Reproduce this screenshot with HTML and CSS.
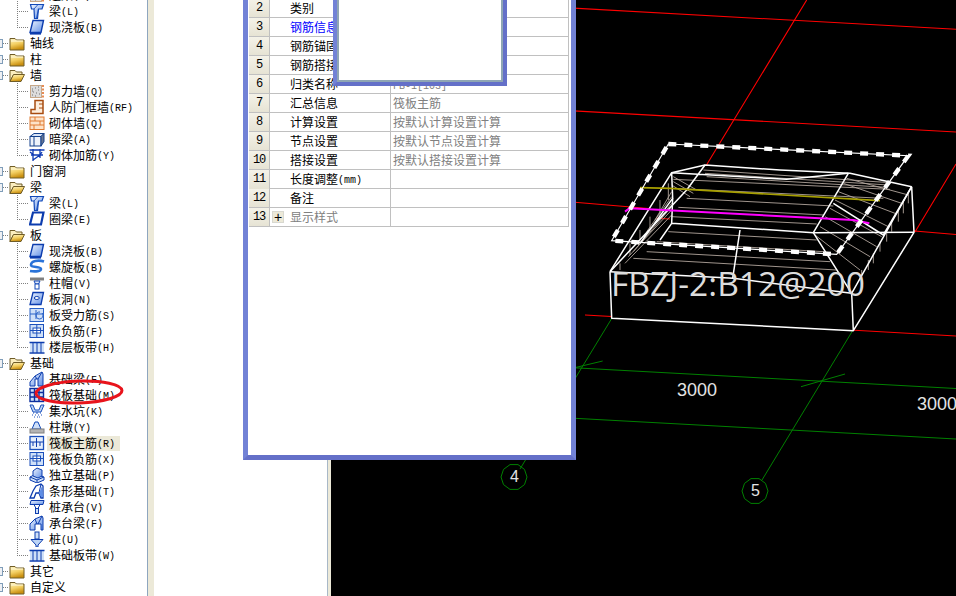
FILE: index.html
```html
<!DOCTYPE html>
<html lang="zh">
<head>
<meta charset="utf-8">
<title>筏板主筋</title>
<link rel="stylesheet" href="styles.css">
</head>
<body>
<svg class="defs" width="0" height="0">
  <defs>
    <linearGradient id="fy" x1="0" y1="0" x2="0.3" y2="1"><stop offset="0" stop-color="#fff6c8"/><stop offset=".55" stop-color="#f3cf62"/><stop offset="1" stop-color="#c98f10"/></linearGradient>
    <linearGradient id="bl" x1="0" y1="0" x2="1" y2="1"><stop offset="0" stop-color="#f2f7ff"/><stop offset="1" stop-color="#5f8ee6"/></linearGradient>
    <symbol id="fc" viewBox="0 0 16 16"><path d="M1 3.500h5l1.500 1.500H15V15H1z" fill="url(#fy)" stroke="#6f5c28"/><path d="M2 6h12" stroke="#fffbe0"/></symbol>
    <symbol id="fo" viewBox="0 0 16 16"><path d="M1 3.500h5L7.500 5H13v3H4.500L1 14.500z" fill="#fbeec0" stroke="#6f5c28"/><path d="M4.500 7.500H15.500L12 14.500H1z" fill="url(#fy)" stroke="#6f5c28"/></symbol>
    <symbol id="liang" viewBox="0 0 16 16"><path d="M1.500 1.500h13L13 6H9.500L8.500 15.500h-3L5 6H2.500z" fill="url(#bl)" stroke="#1148b8" stroke-width="1.200"/><path d="M9.500 6l-2 9M5 6l4-4.500" stroke="#1148b8" stroke-width=".8"/></symbol>
    <symbol id="slab" viewBox="0 0 16 16"><path d="M4 1.500h10.500L12 13.500H1z" fill="url(#bl)" stroke="#0c3cae" stroke-width="1.400"/><path d="M1 14.800h11" stroke="#0c3cae" stroke-width="1.600"/></symbol>
    <symbol id="ring" viewBox="0 0 16 16"><path d="M4 1.500h10.500L12 13.500H1z" fill="#fff" stroke="#0c3cae" stroke-width="2.200"/></symbol>
    <symbol id="shear" viewBox="0 0 16 16"><rect x="1.500" y="2.500" width="11" height="12" fill="#dcdcdc" stroke="#c8a888"/><path d="M3 6h1M6 5h1M9 7h1M4 9h1M7 10h1M10 11h1M3 12h1M6 13h1M3 8h1M9 4h1" stroke="#707070"/><path d="M14 2v13" stroke="#e0661c" stroke-dasharray="2 1.500" stroke-width="1.500"/></symbol>
    <symbol id="door" viewBox="0 0 16 16"><path d="M6 1.500h8v13H2v-4h4z" fill="#fdeedd" stroke="#a84c10" stroke-width="1.500"/><path d="M10 5h4M10 9h4" stroke="#a84c10"/></symbol>
    <symbol id="brick" viewBox="0 0 16 16"><rect x="1" y="2" width="14" height="12.500" fill="#fde3c8" stroke="#e07a30"/><path d="M1 6h14M1 10h14M6 2v4M11 6v4M5 10v4.500" stroke="#e07a30"/></symbol>
    <symbol id="hbeam" viewBox="0 0 16 16"><path d="M1 5.500l4-3h10l-3 3z" fill="#d8e4f8" stroke="#14418c"/><rect x="1" y="5.500" width="11" height="9.500" fill="#eef3fb" stroke="#14418c"/><path d="M12 5.500l3-3v8l-3 4.500z" fill="#687690" stroke="#14418c"/><path d="M5 5.500V15" stroke="#14418c"/></symbol>
    <symbol id="net" viewBox="0 0 16 16"><path d="M.5 3h15M2 8h12M4 2v12M11 2v9M4 13l7-5M1 5l4 3M13 5l-2 3" fill="none" stroke="#0f3bb4" stroke-width="1.300"/></symbol>
    <symbol id="spiral" viewBox="0 0 16 16"><path d="M15 2.500C9 .5 2 2 2 6c0 3 10 1 10 4 0 2-5 3-11 2" fill="none" stroke="#2a73d8" stroke-width="2.600"/></symbol>
    <symbol id="cap" viewBox="0 0 16 16"><path d="M1 4h14" stroke="#808080" stroke-width="3"/><path d="M5 6h6L9.500 9h-3z" fill="#e8eefb" stroke="#1148b8"/><rect x="6" y="9" width="4" height="5" fill="#fff" stroke="#1148b8"/></symbol>
    <symbol id="hole" viewBox="0 0 16 16"><path d="M4 1.500h10.500L12 13.500H1z" fill="url(#bl)" stroke="#0c3cae" stroke-width="1.300"/><ellipse cx="7.800" cy="7" rx="2.500" ry="1.500" fill="#fff" stroke="#0c3cae"/></symbol>
    <symbol id="stress" viewBox="0 0 16 16"><rect x="1" y="1.500" width="13.500" height="13" fill="#cfe0f8" stroke="#2a62c8"/><path d="M1 7h13M7 3v9" stroke="#2a62c8"/><path d="M13 6a3.500 3.500 0 1 1-2-1" fill="none" stroke="#2a62c8"/></symbol>
    <symbol id="neg" viewBox="0 0 16 16"><rect x="1" y="1.500" width="13.500" height="13" fill="#cfe0f8" stroke="#1c50bc"/><rect x="4" y="5" width="7.500" height="5" fill="#fff" stroke="#1c50bc"/><path d="M1 7.500h13.500M7.800 2v12" stroke="#1c50bc"/></symbol>
    <symbol id="strip" viewBox="0 0 16 16"><rect x="1" y="4" width="14" height="9" fill="#cfe0f8"/><path d="M.5 3.500h15M.5 14h15" stroke="#0c3cae" stroke-width="1.400"/><path d="M4 3.500V14M8 3.500V14M12 3.500V14" stroke="#0c3cae"/></symbol>
    <symbol id="fbeam" viewBox="0 0 16 16"><path d="M1 15V11L6 5l7-4 1 2v12H9V8H6v7z" fill="url(#bl)" stroke="#0c3cae"/><path d="M6 5l2 3M13 1l-4 7" stroke="#0c3cae"/></symbol>
    <symbol id="grid" viewBox="0 0 16 16"><rect x="1" y="1.500" width="13.500" height="13" fill="#cfe0f8" stroke="#0c2f9e" stroke-width="1.400"/><path d="M1 5.500h13.500M1 10h13.500M5.500 1.500v13M10 1.500v13" stroke="#0c2f9e" stroke-width="1.400"/></symbol>
    <symbol id="pit" viewBox="0 0 16 16"><path d="M1 2h3l2 5h4l2-5h3l-3 7H4z" fill="#bcd4f6" stroke="#1c50bc"/><path d="M4 10h1M7 10h2M11 10h1M3 12h1M6 12h1M9 12h1M12 12h1M5 14h1M8 14h1M10 14h1" stroke="#1c50bc"/></symbol>
    <symbol id="pier" viewBox="0 0 16 16"><path d="M6 3h3l3 7H3z" fill="#cfe0f8" stroke="#1148b8"/><rect x="1" y="10" width="14" height="4" fill="#b4b4b4" stroke="#808080"/></symbol>
    <symbol id="main" viewBox="0 0 16 16"><rect x="1" y="1.500" width="13.500" height="13" fill="#e6effc" stroke="#1c50bc" stroke-width="1.300"/><path d="M1 7h13.500M7.500 3v9M4 7v4M11 7v4" stroke="#0c3cae" fill="none"/></symbol>
    <symbol id="iso" viewBox="0 0 16 16"><path d="M1 10l6-3 8 3v3l-7 3-7-3z" fill="#cfe0f8" stroke="#0c3cae"/><path d="M1 10l7 3 7-3M8 13v3" fill="none" stroke="#0c3cae"/><path d="M4 4l4-3 5 2v6l-4 2-5-2z" fill="url(#bl)" stroke="#0c3cae"/></symbol>
    <symbol id="arch" viewBox="0 0 16 16"><path d="M1 15l3-7 3-5 5-2 2 2v12h-2l-2-5H7l-2 5z" fill="#fff" stroke="#0c3cae" stroke-width="1.300"/><path d="M12 1l-2 9" stroke="#0c3cae"/><path d="M10 10l3-7 1 11h-2z" fill="#5f8ee6"/></symbol>
    <symbol id="pcap" viewBox="0 0 16 16"><path d="M2 1.500h13l-1 4H1z" fill="url(#bl)" stroke="#0c3cae"/><path d="M5 5.500h6L9 9.500H7z" fill="#fff" stroke="#0c3cae"/><rect x="6.500" y="9.500" width="3" height="5" fill="#cfe0f8" stroke="#0c3cae"/></symbol>
    <symbol id="cbeam" viewBox="0 0 16 16"><path d="M1 15V9L6 4l7-3 1 2v12h-2V9H6v6z" fill="url(#bl)" stroke="#0c3cae"/><path d="M6 4l2 5M13 1l-4 8" stroke="#0c3cae"/></symbol>
    <symbol id="pile" viewBox="0 0 16 16"><rect x="6" y="1" width="4" height="7" fill="#cfe0f8" stroke="#0c3cae"/><path d="M2 8.500h12L9 14v2H7v-2z" fill="#bcd4f6" stroke="#0c3cae"/></symbol>
  </defs>
</svg>

<main class="app">
  <nav class="tree">
    <div class="row child"><i class="conn"></i><svg class="ico"><use href="#shear"/></svg><span class="lab">连梁<b class="k">(G)</b></span></div>
    <div class="row child"><i class="conn"></i><svg class="ico"><use href="#liang"/></svg><span class="lab">梁<b class="k">(L)</b></span></div>
    <div class="row child"><i class="conn end"></i><svg class="ico"><use href="#slab"/></svg><span class="lab">现浇板<b class="k">(B)</b></span></div>
    <div class="row group"><i class="exp"></i><i class="dash"></i><svg class="ico"><use href="#fc"/></svg><span class="lab">轴线</span></div>
    <div class="row group"><i class="exp"></i><i class="dash"></i><svg class="ico"><use href="#fc"/></svg><span class="lab">柱</span></div>
    <div class="row group"><i class="exp"></i><i class="dash"></i><svg class="ico"><use href="#fo"/></svg><span class="lab">墙</span></div>
    <div class="row child"><i class="conn"></i><svg class="ico"><use href="#shear"/></svg><span class="lab">剪力墙<b class="k">(Q)</b></span></div>
    <div class="row child"><i class="conn"></i><svg class="ico"><use href="#door"/></svg><span class="lab">人防门框墙<b class="k">(RF)</b></span></div>
    <div class="row child"><i class="conn"></i><svg class="ico"><use href="#brick"/></svg><span class="lab">砌体墙<b class="k">(Q)</b></span></div>
    <div class="row child"><i class="conn"></i><svg class="ico"><use href="#hbeam"/></svg><span class="lab">暗梁<b class="k">(A)</b></span></div>
    <div class="row child"><i class="conn end"></i><svg class="ico"><use href="#net"/></svg><span class="lab">砌体加筋<b class="k">(Y)</b></span></div>
    <div class="row group"><i class="exp"></i><i class="dash"></i><svg class="ico"><use href="#fc"/></svg><span class="lab">门窗洞</span></div>
    <div class="row group"><i class="exp"></i><i class="dash"></i><svg class="ico"><use href="#fo"/></svg><span class="lab">梁</span></div>
    <div class="row child"><i class="conn"></i><svg class="ico"><use href="#liang"/></svg><span class="lab">梁<b class="k">(L)</b></span></div>
    <div class="row child"><i class="conn end"></i><svg class="ico"><use href="#ring"/></svg><span class="lab">圈梁<b class="k">(E)</b></span></div>
    <div class="row group"><i class="exp"></i><i class="dash"></i><svg class="ico"><use href="#fo"/></svg><span class="lab">板</span></div>
    <div class="row child"><i class="conn"></i><svg class="ico"><use href="#slab"/></svg><span class="lab">现浇板<b class="k">(B)</b></span></div>
    <div class="row child"><i class="conn"></i><svg class="ico"><use href="#spiral"/></svg><span class="lab">螺旋板<b class="k">(B)</b></span></div>
    <div class="row child"><i class="conn"></i><svg class="ico"><use href="#cap"/></svg><span class="lab">柱帽<b class="k">(V)</b></span></div>
    <div class="row child"><i class="conn"></i><svg class="ico"><use href="#hole"/></svg><span class="lab">板洞<b class="k">(N)</b></span></div>
    <div class="row child"><i class="conn"></i><svg class="ico"><use href="#stress"/></svg><span class="lab">板受力筋<b class="k">(S)</b></span></div>
    <div class="row child"><i class="conn"></i><svg class="ico"><use href="#neg"/></svg><span class="lab">板负筋<b class="k">(F)</b></span></div>
    <div class="row child"><i class="conn end"></i><svg class="ico"><use href="#strip"/></svg><span class="lab">楼层板带<b class="k">(H)</b></span></div>
    <div class="row group"><i class="exp"></i><i class="dash"></i><svg class="ico"><use href="#fo"/></svg><span class="lab">基础</span></div>
    <div class="row child"><i class="conn"></i><svg class="ico"><use href="#fbeam"/></svg><span class="lab">基础梁<b class="k">(F)</b></span></div>
    <div class="row child"><i class="conn"></i><svg class="ico"><use href="#grid"/></svg><span class="lab">筏板基础<b class="k">(M)</b></span></div>
    <div class="row child"><i class="conn"></i><svg class="ico"><use href="#pit"/></svg><span class="lab">集水坑<b class="k">(K)</b></span></div>
    <div class="row child"><i class="conn"></i><svg class="ico"><use href="#pier"/></svg><span class="lab">柱墩<b class="k">(Y)</b></span></div>
    <div class="row child"><i class="conn"></i><svg class="ico"><use href="#main"/></svg><span class="lab sel">筏板主筋<b class="k">(R)</b></span></div>
    <div class="row child"><i class="conn"></i><svg class="ico"><use href="#neg"/></svg><span class="lab">筏板负筋<b class="k">(X)</b></span></div>
    <div class="row child"><i class="conn"></i><svg class="ico"><use href="#iso"/></svg><span class="lab">独立基础<b class="k">(P)</b></span></div>
    <div class="row child"><i class="conn"></i><svg class="ico"><use href="#arch"/></svg><span class="lab">条形基础<b class="k">(T)</b></span></div>
    <div class="row child"><i class="conn"></i><svg class="ico"><use href="#pcap"/></svg><span class="lab">桩承台<b class="k">(V)</b></span></div>
    <div class="row child"><i class="conn"></i><svg class="ico"><use href="#cbeam"/></svg><span class="lab">承台梁<b class="k">(F)</b></span></div>
    <div class="row child"><i class="conn"></i><svg class="ico"><use href="#pile"/></svg><span class="lab">桩<b class="k">(U)</b></span></div>
    <div class="row child"><i class="conn end"></i><svg class="ico"><use href="#strip"/></svg><span class="lab">基础板带<b class="k">(W)</b></span></div>
    <div class="row group"><i class="exp"></i><i class="dash"></i><svg class="ico"><use href="#fc"/></svg><span class="lab">其它</span></div>
    <div class="row group"><i class="exp"></i><i class="dash"></i><svg class="ico"><use href="#fc"/></svg><span class="lab">自定义</span></div>
  </nav>
  <div class="split"></div>
  <div class="panel"></div>
  <div class="split narrow"></div>

  <svg class="cad" viewBox="331 0 625 596" width="625" height="596">
    <g class="red">
      <path d="M560 7.400L956 29.300M560 110.100L956 132M560 201L956 234.500M585 315L956 336"/>
      <path d="M806.700 0L706.500 165M956 164L915 232"/>
    </g>
    <g class="green">
      <path d="M612 318L520 469M853 330L762 480"/>
      <path d="M560 367L956 388.500M560 417.500L956 439"/>
      <path d="M565 370L602.700 361M801 386.700L845 374"/>
      <polygon points="527,477 524.500,484.600 518,489.400 510,489.400 503.500,484.600 501,477 503.500,469.400 510,464.600 518,464.600 524.500,469.400"/>
      <polygon points="768,491 765.500,498.600 759,503.400 751,503.400 744.500,498.600 742,491 744.500,483.400 751,478.600 759,478.600 765.500,483.400"/>
    </g>
    <g transform="translate(590 120) scale(.33333)">
      <path class="solid" d="M60 455L245 158L345 135L570 150L780 160L965 200L972 337L790 632L65 595z"/>
      <path class="red-bit" d="M200 295L240 297"/>
      <g class="taupe">
        <path d="M340 150L900 188M345 160L895 195M350 170L890 202M250 178L900 208M245 205L880 235M290 235L730 258M265 262L700 285M245 290L680 312M235 335L680 360M200 365L700 395M170 395L720 425M130 415L740 450"/>
        <path d="M675 345L810 450M690 320L840 410M705 290L860 380M720 265L875 350M770 175L955 225M760 190L935 250M745 215L915 280M735 240L895 320"/>
        <path d="M90 450V430M120 405V370M150 365V330M180 325V290M210 285V240M235 240V190M105 430L245 285M130 395L245 260M115 410L245 270M145 375L245 250M170 335L245 230M195 300L245 215M250 170L320 210M245 195L300 230M250 185L310 220"/>
        <path d="M955 215V250M940 245V280M925 270V305M905 300V335M890 330V365M870 365V395M850 400V430M835 420V450M815 450V490"/>
      </g>
      <g class="wire">
        <path d="M60 455L65 595L790 632L972 337L965 200"/>
        <path d="M60 455L430 475L785 520L790 632M785 520L965 200"/>
        <path d="M60 455L245 158L345 135L570 150L780 160L965 200"/>
        <path d="M60 455L290 210L345 135M245 158L248 235L150 370M245 158L590 178L775 160"/>
        <path d="M248 235L245 310L210 360M245 310L670 338L972 337M450 330L428 475"/>
        <path d="M670 338L775 160M670 338L785 520M730 250L880 345L965 200"/>
      </g>
      <path class="yel" d="M150 203L240 205L870 242"/>
      <path class="mag" d="M105 275L118 265L790 300L838 310"/>
      <path class="sel-thin" d="M235 72L955 107L740 403L65 362z"/>
      <path class="sel-dash" d="M235 72L955 107L740 403L65 362z"/>
    </g>
    <text class="lbl big" x="611" y="296" textLength="254" lengthAdjust="spacingAndGlyphs">FBZJ-2:B12@200</text>
    <text class="lbl" x="677" y="396">3000</text>
    <text class="lbl" x="917" y="410">3000</text>
    <text class="lbl small" x="510" y="482">4</text>
    <text class="lbl small" x="751" y="496">5</text>
  </svg>

  <section class="dialog">
    <div class="trow"><div class="num">2</div><div class="name">类别</div><div class="val"></div></div>
    <div class="trow"><div class="num">3</div><div class="name blue">钢筋信息</div><div class="val"></div></div>
    <div class="trow"><div class="num">4</div><div class="name">钢筋锚固</div><div class="val"></div></div>
    <div class="trow"><div class="num">5</div><div class="name">钢筋搭接</div><div class="val"></div></div>
    <div class="trow"><div class="num">6</div><div class="name">归类名称</div><div class="val"><span class="mono">FB-1[103]</span></div></div>
    <div class="trow"><div class="num">7</div><div class="name">汇总信息</div><div class="val">筏板主筋</div></div>
    <div class="trow"><div class="num">8</div><div class="name">计算设置</div><div class="val">按默认计算设置计算</div></div>
    <div class="trow"><div class="num">9</div><div class="name">节点设置</div><div class="val">按默认节点设置计算</div></div>
    <div class="trow"><div class="num">10</div><div class="name">搭接设置</div><div class="val">按默认搭接设置计算</div></div>
    <div class="trow"><div class="num">11</div><div class="name">长度调整<b class="k">(mm)</b></div><div class="val"></div></div>
    <div class="trow"><div class="num">12</div><div class="name">备注</div><div class="val"></div></div>
    <div class="trow"><div class="num">13</div><div class="name grey has-box"><i class="plus">+</i>显示样式</div><div class="val"></div></div>
  </section>

  <section class="nested"><div class="nested-in"></div></section>

  <svg class="circle" viewBox="0 0 100 34" width="100" height="34">
    <ellipse cx="50" cy="17" rx="43" ry="11" transform="rotate(-2 50 17)"/>
  </svg>
</main>
</body>
</html>
```

FILE: styles.css
```css
* { box-sizing: border-box; }
html, body { margin: 0; padding: 0; background: #000; }
body { width: 956px; height: 596px; overflow: hidden; font: 12px/16px "Noto Sans CJK SC", "Liberation Sans", sans-serif; color: #000; }
.defs { position: absolute; }

.app { position: relative; display: flex; width: 956px; height: 596px; overflow: hidden; }

.tree { flex: 0 0 147px; height: 596px; overflow: hidden; background: #fff; }
.tree > .row:first-child { margin-top: -13px; }
.row { display: flex; align-items: center; height: 16px; white-space: nowrap; }
.ico { flex: none; width: 16px; height: 16px; }
.lab { display: block; height: 15px; line-height: 14px; margin-left: 2px; padding: 0 5px 0 2px; }
.child .conn { flex: none; display: block; width: 11px; height: 16px; margin: 0 1px 0 17px;
  background-image: repeating-linear-gradient(to bottom, #808080 0 1px, transparent 1px 2px), repeating-linear-gradient(to right, #808080 0 1px, transparent 1px 2px);
  background-size: 1px 100%, 100% 1px; background-position: 0 0, 0 8px; background-repeat: no-repeat; }
.child .conn.end { background-size: 1px 8px, 100% 1px; }
.group .exp { flex: none; display: block; width: 9px; height: 9px; margin-left: -6px; background: #eef0f4; border: 1px solid #7f9db9; }
.group .dash { flex: none; display: block; width: 6px; height: 1px; background-image: repeating-linear-gradient(to right, #808080 0 1px, transparent 1px 2px); }
.group .lab { margin-left: 0; padding-left: 5px; }
.sel { background: #ece9d8; }
.k { font: 400 10px/14px "Liberation Mono", monospace; position: relative; top: -1px; }

.split { flex: 0 0 7px; height: 596px; background: #ece9d8; border-left: 1px solid #8ea6bf; }
.split.narrow { flex: 0 0 4px; border-left-color: #a8b8c8; }
.panel { flex: 0 0 173px; height: 596px; background: #fff; }

.cad { flex: none; display: block; background: #000; }
.red path { fill: none; stroke: #f00; stroke-width: 1.100; }
.red-bit { fill: none; stroke: #f00; stroke-width: 3; }
.solid { fill: #000; }
.green path, .green polygon { fill: none; stroke: #008000; stroke-width: 1; }
.taupe path { fill: none; stroke: #b8aca2; stroke-width: 2.600; }
.wire path { fill: none; stroke: #fff; stroke-width: 4.500; stroke-linejoin: round; }
.yel { fill: none; stroke: #a8a000; stroke-width: 5; }
.mag { fill: none; stroke: #ff00ff; stroke-width: 6; }
.sel-thin { fill: none; stroke: #fff; stroke-width: 3.500; }
.sel-dash { fill: none; stroke: #fff; stroke-width: 13; stroke-dasharray: 24 24; }
.lbl { font: 18px "Liberation Sans", sans-serif; fill: #e4e4e4; }
.big { font: 400 33px "Open Sans", sans-serif; fill: #dcdcdc; }
.small { font-size: 16px; }

.dialog { position: absolute; left: 243px; top: -8px; width: 333px; height: 468px; padding: 2px 2px 0 1px; background: #fff; border: 5px solid #7282d6; border-bottom-color: #6470c8; }
.trow { display: grid; grid-template-columns: 21px 121px 1fr; height: 19px; border-bottom: 1px solid #c0c0c0; border-right: 1px solid #c0c0c0; }
.num { background: linear-gradient(#f4f2e8, #e6e3d4); border-right: 1px solid #c0c0c0; text-align: center; font: 12px/18px "Liberation Mono", monospace; letter-spacing: -1.200px; }
.name { padding-left: 20px; line-height: 18px; border-right: 1px solid #c0c0c0; white-space: nowrap; }
.val { padding-left: 2px; line-height: 18px; color: #808080; white-space: nowrap; overflow: hidden; }
.mono { font: 10px/18px "Liberation Mono", monospace; }
.blue { color: #0000ff; }
.grey { color: #808080; }
.has-box { display: flex; align-items: center; padding-left: 2px; }
.plus { flex: none; display: block; width: 12px; height: 12px; margin-right: 6px; background: #ece9d8; border: 1px solid #d8d8d0; color: #000; font: normal 14px/10px "Liberation Sans", sans-serif; text-align: center; }

.nested { position: absolute; left: 333px; top: -20px; width: 174px; height: 106px; border: 4px solid #7282d6; border-bottom-color: #6470c8; border-right-color: #6470c8; }
.nested-in { height: 100%; background: #fff; border: 2px solid #8fa6b4; }

.circle { position: absolute; left: 29px; top: 375px; }
.circle ellipse { fill: none; stroke: #e8141c; stroke-width: 3; }
```
